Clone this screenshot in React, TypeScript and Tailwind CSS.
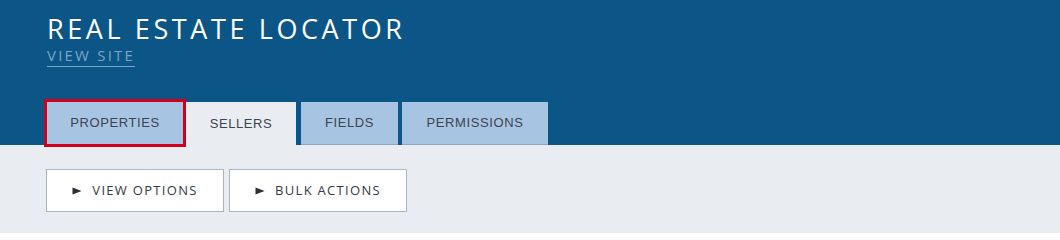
import React from "react";

function Tab({
  label,
  className,
}: {
  label: string;
  className: string;
}) {
  return (
    <div
      className={
        "flex items-center justify-center font-['Liberation_Sans',Arial,sans-serif] text-[13px] tracking-[0.6px] text-[#3d4450] " +
        className
      }
    >
      {label}
    </div>
  );
}

export default function App() {
  return (
    <div className="min-h-[233px] w-full bg-[#e9edf1] font-['Open_Sans',sans-serif]">
      <div className="bg-[#0b5587] pl-[47px]">
        <div className="pt-[15px]">
          <h1 className="text-[27px] leading-[28px] text-white tracking-[3.6px]">
            REAL ESTATE LOCATOR
          </h1>
          <a
            href="#"
            className="inline-block text-[15px] leading-[16px] tracking-[2.2px] text-[#7aa5c9] border-b border-[#7aa5c9] pb-[3px]"
          >
            VIEW SITE
          </a>
        </div>
        <div className="flex items-end mt-[35px] h-[43px]">
          <Tab
            label="PROPERTIES"
            className="relative z-10 w-[136px] h-[42px] self-start bg-[#a7c4e2] outline-[3px] outline-solid outline-[#d0021b]"
          />
          <Tab
            label="SELLERS"
            className="ml-[3px] w-[110px] h-[43px] bg-[#e9edf1]"
          />
          <Tab
            label="FIELDS"
            className="ml-[5px] w-[97px] h-[43px] bg-[#a7c4e2] border-b border-[#8ea7c2]"
          />
          <Tab
            label="PERMISSIONS"
            className="ml-[4px] w-[146px] h-[43px] bg-[#a7c4e2] border-b border-[#8ea7c2]"
          />
        </div>
      </div>
      <div className="flex gap-[5px] pl-[46px] pt-[24px]">
        {["VIEW OPTIONS", "BULK ACTIONS"].map((label) => (
          <button
            key={label}
            className="w-[178px] h-[43px] bg-white border border-[#a9b6c5] flex items-center justify-center text-[13px] tracking-[1.3px] text-[#333a44]"
          >
            <svg width="10" height="8" viewBox="0 0 10 8" className="mr-[10px]">
              <path d="M0.5 0.5 L9.5 4 L0.5 7.5 Z" fill="#2b2f36" />
            </svg>
            {label}
          </button>
        ))}
      </div>
    </div>
  );
}
